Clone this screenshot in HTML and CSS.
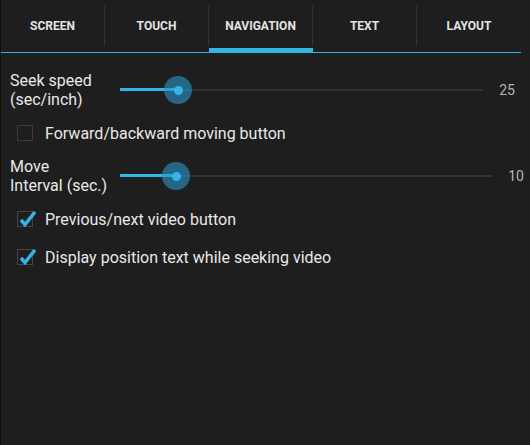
FILE: index.html
```html
<!DOCTYPE html>
<html lang="en">
<head>
    <meta charset="UTF-8">
    <title>Settings - Navigation</title>
    <link rel="stylesheet" href="styles.css">
</head>
<body>
    <div class="page">
        <div class="tabbar">
            <div class="tab"><div class="tab-label">SCREEN</div><div class="tab-line"></div></div>
            <div class="tab"><div class="tab-label">TOUCH</div><div class="tab-line"></div></div>
            <div class="tab active"><div class="tab-label">NAVIGATION</div><div class="tab-line"></div></div>
            <div class="tab"><div class="tab-label">TEXT</div><div class="tab-line"></div></div>
            <div class="tab last"><div class="tab-label">LAYOUT</div><div class="tab-line"></div></div>
        </div>

        <div class="content">
            <div class="slider-row row-seek">
                <div class="slider-label">Seek speed<br>(sec/inch)</div>
                <div class="slider">
                    <div class="track"></div>
                    <div class="track-fill" style="width: 58px"></div>
                    <div class="thumb" style="left: 58px"><span class="thumb-dot"></span></div>
                </div>
                <div class="slider-value">25</div>
            </div>

            <div class="check-row">
                <span class="box"></span>
                <span class="check-text">Forward/backward moving button</span>
            </div>

            <div class="slider-row row-move">
                <div class="slider-label">Move<br>Interval (sec.)</div>
                <div class="slider">
                    <div class="track"></div>
                    <div class="track-fill" style="width: 56px"></div>
                    <div class="thumb" style="left: 56px"><span class="thumb-dot"></span></div>
                </div>
                <div class="slider-value">10</div>
            </div>

            <div class="check-row">
                <span class="box checked">
                    <svg class="tick" width="22" height="18" viewBox="0 0 22 18"><path d="M4 9 L8 13.5 L18 1" fill="none" stroke="#33b5e5" stroke-width="3.5"/></svg>
                </span>
                <span class="check-text">Previous/next video button</span>
            </div>

            <div class="check-row">
                <span class="box checked">
                    <svg class="tick" width="22" height="18" viewBox="0 0 22 18"><path d="M4 9 L8 13.5 L18 1" fill="none" stroke="#33b5e5" stroke-width="3.5"/></svg>
                </span>
                <span class="check-text">Display position text while seeking video</span>
            </div>
        </div>
    </div>
</body>
</html>
```

FILE: styles.css
```css
*{
    margin: 0;
    padding: 0;
    box-sizing: border-box;
}
html,body{
    height: 100%;
}
body{
    background: #1e1e1e;
    font-family: Roboto, "Liberation Sans", sans-serif;
    color: #e8e8e8;
}
.page{
    height: 100%;
    border-left: 1px solid #111;
}

/* tabs */
.tabbar{
    display: flex;
    height: 54px;
}
.tab{
    width: 104px;
    display: flex;
    flex-direction: column;
}
.tab-label{
    height: 39px;
    margin-top: 6px;
    display: flex;
    align-items: center;
    justify-content: center;
    font-size: 12px;
    font-weight: bold;
    color: #e4e4e4;
    border-right: 1px solid #333;
}
.tab.last .tab-label{
    border-right: none;
}
.tab-line{
    margin-top: 7px;
    height: 1px;
    background: #33b5e5;
}
.tab.active .tab-line{
    margin-top: 3px;
    height: 5px;
}

/* rows */
.content{
    padding-top: 12px;
}
.slider-row{
    height: 48px;
    display: flex;
    align-items: center;
    padding-left: 9px;
}
.row-seek{
    padding-right: 15px;
}
.row-move{
    padding-right: 6px;
}
.slider-label{
    width: 110px;
    font-size: 16px;
    line-height: 19px;
    white-space: nowrap;
}
.slider{
    flex: 1;
    height: 28px;
    position: relative;
}
.track{
    position: absolute;
    left: 0;
    right: 0;
    top: 13px;
    height: 2px;
    background: #323232;
}
.track-fill{
    position: absolute;
    left: 0;
    top: 12px;
    height: 3px;
    background: #33b5e5;
}
.thumb{
    position: absolute;
    top: 0;
    width: 28px;
    height: 28px;
    margin-left: -14px;
    border-radius: 50%;
    background: rgba(42, 150, 200, 0.6);
    display: flex;
    align-items: center;
    justify-content: center;
}
.thumb-dot{
    width: 9px;
    height: 9px;
    border-radius: 50%;
    background: #33b5e5;
}
.slider-value{
    margin-left: 16px;
    font-size: 14px;
    color: #b4b4b4;
}

.check-row{
    height: 38px;
    display: flex;
    align-items: center;
    padding-left: 16px;
}
.box{
    width: 16px;
    height: 16px;
    border: 1px solid #3c3c3c;
    position: relative;
    flex-shrink: 0;
}
.box.checked{
    border-color: #444;
}
.tick{
    position: absolute;
    left: -1px;
    top: -1px;
}
.check-text{
    margin-left: 12px;
    font-size: 16px;
    line-height: 19px;
}
```
